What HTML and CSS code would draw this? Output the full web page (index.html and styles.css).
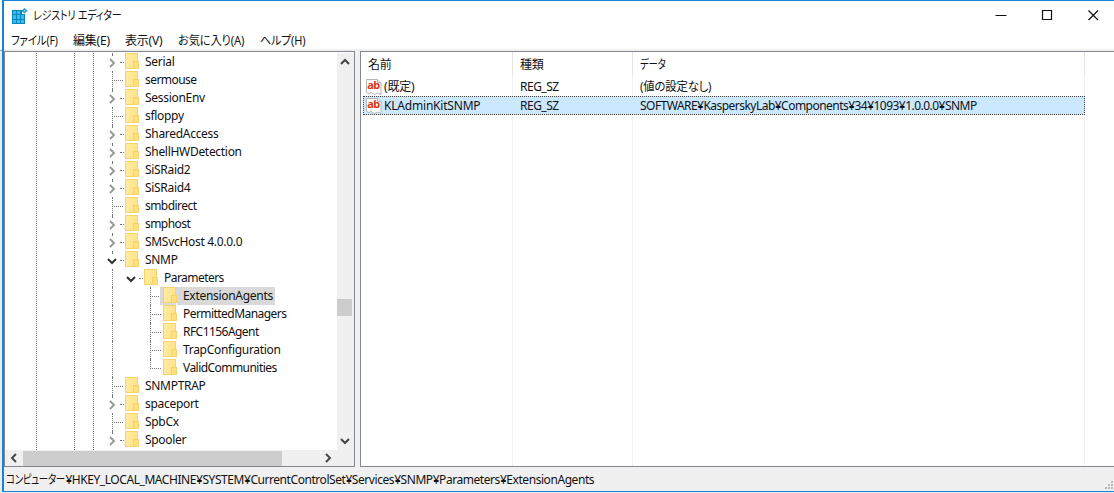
FILE: index.html
```html
<!DOCTYPE html>
<html lang="ja">
<head>
    <meta charset="UTF-8">
    <title>レジストリ エディター</title>
    <link rel="stylesheet" href="styles.css">
</head>
<body>
<svg class="defs" width="0" height="0">
    <symbol id="right" viewBox="0 0 10 10">
        <path d="M3 1l4 4-4 4" fill="none" stroke="currentColor" stroke-width="1.900"/>
    </symbol>
    <symbol id="down" viewBox="0 0 10 10">
        <path d="M1 3l4 4 4-4" fill="none" stroke="currentColor" stroke-width="2"/>
    </symbol>
    <symbol id="string" viewBox="0 0 16 16">
        <path d="M.5 .5h11l3.500 3v12l-3.500-1.500-3 1.500-3.500-2-2 1-2.500-1z" fill="#fff" stroke="#b4b4b4"/>
        <path d="M11.500 .5v3h3.500" fill="#eee" stroke="#b4b4b4"/>
        <text x="1.300" y="10" class="ab">ab</text>
    </symbol>
</svg>
<div class="window">
    <div class="title">
        <svg class="logo" width="16" height="16" viewBox="0 0 16 16">
            <path d="M0 2h10v4h3v10H0z" fill="#0a86bd"/>
            <path d="M1 3h3v3H1zM5 3h3v3H5zM1 7h3v4H1zM5 7h3v4H5zM9 7h3v4H9zM1 12h3v3H1zM5 12h3v3H5zM9 12h3v3H9z" fill="#35bdf0"/>
            <path d="M12.500 0l3 2.700-3 2.800-3-2.800z" fill="#1591c4"/>
            <path d="M12.500 1.500l1.300 1.200-1.300 1.300-1.300-1.300z" fill="#7bdcfb"/>
        </svg>
        <h1>レジストリ エディター</h1>
        <div class="controls">
            <svg width="12" height="12" viewBox="0 0 12 12"><path d="M.5 6.500h11" stroke="#111"/></svg>
            <svg width="12" height="12" viewBox="0 0 12 12"><path d="M1.500 1.500h9v9h-9z" fill="none" stroke="#111" stroke-width="1.200"/></svg>
            <svg width="12" height="12" viewBox="0 0 12 12"><path d="M1.500 1.500l9.500 9.500M11 1.500L1.500 11" stroke="#111" stroke-width="1.200"/></svg>
        </div>
    </div>
    <div class="menu">
        <span class="file">ファイル(F)</span>
        <span class="edit">編集(E)</span>
        <span class="view">表示(V)</span>
        <span class="fav">お気に入り(A)</span>
        <span class="help">ヘルプ(H)</span>
    </div>
    <div class="main">
        <div class="tree">
            <div class="tree-body">
                <ul>
                    <li class="has"><em><svg><use href="#right"/></svg></em><i></i><span>Serial</span></li>
                    <li><em></em><i></i><span class="tight">sermouse</span></li>
                    <li class="has"><em><svg><use href="#right"/></svg></em><i></i><span>SessionEnv</span></li>
                    <li><em></em><i></i><span>sfloppy</span></li>
                    <li class="has"><em><svg><use href="#right"/></svg></em><i></i><span>SharedAccess</span></li>
                    <li class="has"><em><svg><use href="#right"/></svg></em><i></i><span>ShellHWDetection</span></li>
                    <li class="has"><em><svg><use href="#right"/></svg></em><i></i><span>SiSRaid2</span></li>
                    <li class="has"><em><svg><use href="#right"/></svg></em><i></i><span>SiSRaid4</span></li>
                    <li><em></em><i></i><span class="tight">smbdirect</span></li>
                    <li class="has"><em><svg><use href="#right"/></svg></em><i></i><span class="tight">smphost</span></li>
                    <li class="has"><em><svg><use href="#right"/></svg></em><i></i><span>SMSvcHost 4.0.0.0</span></li>
                    <li class="has open"><em><svg><use href="#down"/></svg></em><i></i><span>SNMP</span></li>
                    <li class="has open two"><em><svg><use href="#down"/></svg></em><i></i><span class="tight">Parameters</span></li>
                    <li class="three on"><em></em><i></i><span>ExtensionAgents</span></li>
                    <li class="three"><em></em><i></i><span class="tight">PermittedManagers</span></li>
                    <li class="three"><em></em><i></i><span class="tight">RFC1156Agent</span></li>
                    <li class="three"><em></em><i></i><span>TrapConfiguration</span></li>
                    <li class="three last"><em></em><i></i><span class="tight">ValidCommunities</span></li>
                    <li><em></em><i></i><span>SNMPTRAP</span></li>
                    <li class="has"><em><svg><use href="#right"/></svg></em><i></i><span>spaceport</span></li>
                    <li><em></em><i></i><span>SpbCx</span></li>
                    <li class="has"><em><svg><use href="#right"/></svg></em><i></i><span>Spooler</span></li>
                </ul>
                <div class="vbar">
                    <svg class="up"><use href="#down"/></svg>
                    <b></b>
                    <svg><use href="#down"/></svg>
                </div>
            </div>
            <div class="hbar">
                <svg class="left"><use href="#right"/></svg>
                <b></b>
                <svg><use href="#right"/></svg>
            </div>
        </div>
        <div class="list">
            <div class="row head">
                <span>名前</span>
                <span>種類</span>
                <span><u class="data">データ</u></span>
            </div>
            <div class="row">
                <span><svg><use href="#string"/></svg>(既定)</span>
                <span class="type">REG_SZ</span>
                <span><u class="unset">(値の設定なし)</u></span>
            </div>
            <div class="row on">
                <span><svg><use href="#string"/></svg>KLAdminKitSNMP</span>
                <span class="type">REG_SZ</span>
                <span class="path">SOFTWARE¥KasperskyLab¥Components¥34¥1093¥1.0.0.0¥SNMP</span>
            </div>
            <div class="row rest">
                <span></span>
                <span></span>
                <span></span>
            </div>
        </div>
    </div>
    <div class="status">
        <div><u class="pc">コンピューター</u>¥HKEY_LOCAL_MACHINE¥SYSTEM¥CurrentControlSet¥Services¥SNMP¥Parameters¥ExtensionAgents</div>
        <svg width="10" height="10" viewBox="0 0 10 10"><path d="M7 0h2v2H7zM4 3h2v2H4zM7 3h2v2H7zM1 6h2v2H1zM4 6h2v2H4zM7 6h2v2H7z" fill="#b9b9b9"/></svg>
    </div>
</div>
</body>
</html>
```
FILE: styles.css
```css
* {
    margin: 0;
    padding: 0;
    box-sizing: border-box;
}

body {
    height: 493px;
    padding-left: 2px;
    background: linear-gradient(#fff 50px, #999 50px 51px, #ececec 51px);
    font: 12px/18px "Noto Sans", "Noto Sans CJK JP", sans-serif;
    font-feature-settings: "palt";
    letter-spacing: -0.2px;
    color: #111;
    white-space: nowrap;
    overflow: hidden;
}

ul, li {
    list-style: none;
}

u {
    display: inline-block;
    text-decoration: none;
    transform-origin: left;
}

svg {
    display: block;
    flex: none;
}

.defs {
    display: none;
}

.window {
    display: flex;
    flex-direction: column;
    height: 492px;
    border: 1px solid #1883d7;
    border-left-width: 2px;
    border-right: 0;
    background: #fff;
}

/* title bar */
.title {
    display: flex;
    height: 29px;
    padding-left: 8px;
}

.logo {
    margin-top: 7px;
}

.title h1 {
    margin: 6px 0 0 5px;
    font-size: 12px;
    font-weight: normal;
    transform: scaleX(.83);
    transform-origin: left;
}

.controls {
    display: flex;
    gap: 34px;
    margin: 8px 15px 0 auto;
}

.menu {
    display: flex;
    height: 20px;
    padding: 3px 0 0 7px;
}

.menu span {
    transform-origin: left;
}

.menu .file {
    width: 62px;
    transform: scaleX(.87);
}

.menu .edit {
    width: 52px;
}

.menu .view {
    width: 53px;
}

.menu .fav {
    width: 82px;
    transform: scaleX(.94);
}

.menu .help {
    transform: scaleX(.92);
}

/* panes */
.main {
    display: flex;
    gap: 5px;
    height: 419px;
    padding-top: 1px;
    border-top: 1px solid #f0f0f0;
    background: #f0f0f0;
}

.tree {
    width: 351px;
    border: 1px solid #828790;
    background: #fff;
    letter-spacing: -0.3px;
}

.tree-body {
    display: flex;
    height: 398px;
}

.tree ul {
    flex: 1;
    height: 398px;
    padding-top: 1px;
    background: repeating-linear-gradient(#fff 0 1px, transparent 1px 2px),
        linear-gradient(#777, #777) 31px 0 / 1px 100% no-repeat,
        linear-gradient(#777, #777) 69px 0 / 1px 100% no-repeat,
        linear-gradient(#777, #777) 88px 0 / 1px 100% no-repeat;
    overflow: hidden;
}

.tree li {
    position: relative;
    display: flex;
    height: 18px;
    padding-left: 107px;
}

.tree li:before {
    content: "";
    position: absolute;
    top: 0;
    left: 107px;
    height: 18px;
    border-left: 1px dotted #777;
}

.tree li.has:before {
    height: 2px;
}

.tree li.two:before, .tree li.three:before {
    height: 18px;
}

.tree li.two {
    padding-left: 126px;
}

.tree li.three {
    padding-left: 145px;
}

.tree em {
    position: relative;
    width: 13px;
    height: 18px;
}

/* horizontal stub in front of the folder */
.tree em:before {
    content: "";
    position: absolute;
    top: 9px;
    left: 0;
    width: 11px;
    border-top: 1px dotted #777;
}

.tree .has em:before {
    left: 8px;
    width: 4px;
}

.tree .three em:after {
    content: "";
    position: absolute;
    top: 0;
    left: 0;
    height: 18px;
    border-left: 1px dotted #777;
}

.tree .last em:after {
    height: 10px;
}

.tree em svg {
    width: 10px;
    height: 10px;
    margin: 5px 0 0 -5px;
    color: #999;
}

.tree .open em svg {
    color: #333;
}

/* folder */
.tree i {
    position: relative;
    width: 13px;
    height: 16px;
    margin-right: 1px;
    border: 1px solid #f5d469;
    background: linear-gradient(100deg, #ffeba0, #ffe289);
}

.tree i:after {
    content: "";
    position: absolute;
    right: -2px;
    bottom: -1px;
    width: 4px;
    height: 6px;
    border: 1px solid #f5d469;
    background: #ffe07d;
}

.tree li span {
    padding: 0 4px 0 6px;
    line-height: 17px;
}

.tree li .tight {
    letter-spacing: -0.55px;
}

.tree .on i {
    box-shadow: -3px 0 #d9d9d9, 3px 0 #d9d9d9, 0 2px #d9d9d9, -3px 2px #d9d9d9;
}

.tree .on span {
    padding-right: 2px;
    background: #d9d9d9;
}

.vbar, .hbar {
    display: flex;
    align-items: center;
    background: #f0f0f0;
}

.vbar {
    flex-direction: column;
    width: 17px;
    margin-top: 1px;
    padding: 4px 2px 4px 0;
}

.vbar svg, .hbar svg {
    width: 10px;
    height: 10px;
    color: #444;
}

.vbar .up, .hbar .left {
    transform: rotate(180deg);
}

.vbar b {
    width: 15px;
    height: 17px;
    margin: 232px 0 auto;
    background: #cdcdcd;
}

.hbar {
    height: 16px;
    padding-left: 4px;
}

.hbar b {
    width: 259px;
    height: 15px;
    margin: 0 41px 0 4px;
    background: #cdcdcd;
}

.list {
    display: flex;
    flex-direction: column;
    flex: 1;
    padding-left: 2px;
    border: 1px solid #828790;
    border-right: 0;
    background: #fff;
}

.row {
    display: grid;
    grid-template-columns: 150px 120px 452px;
    width: 722px;
    height: 19px;
}

.row span {
    display: flex;
    align-items: center;
    padding-left: 7px;
    border-right: 1px solid #eef4fa;
}

.row span:first-child {
    padding-left: 3px;
}

.row svg {
    width: 16px;
    height: 16px;
    margin-right: 2px;
}

.row .type {
    letter-spacing: -0.5px;
}

.row .path {
    letter-spacing: -0.53px;
}

.data {
    transform: scaleX(.78);
}

.unset {
    transform: scaleX(.95);
}

.ab {
    font: bold 11px "Noto Sans", sans-serif;
    letter-spacing: -0.7px;
    fill: #dc3818;
}

.head {
    height: 25px;
}

.head span {
    border-color: #e5e5e5;
}

.head span:first-child {
    padding-left: 5px;
}

.row.on {
    background: #cce8ff;
    outline: 1px dotted #444;
    outline-offset: -1px;
}

.row.on span {
    border-color: transparent;
}

.rest {
    flex: 1;
}

.status {
    display: flex;
    justify-content: space-between;
    flex: 1;
    padding: 4px 0 0 2px;
    background: #f0f0f0;
    letter-spacing: -0.44px;
}

.pc {
    margin-right: -15px;
    transform: scaleX(.79);
}

.status svg {
    margin-top: 10px;
}
```
